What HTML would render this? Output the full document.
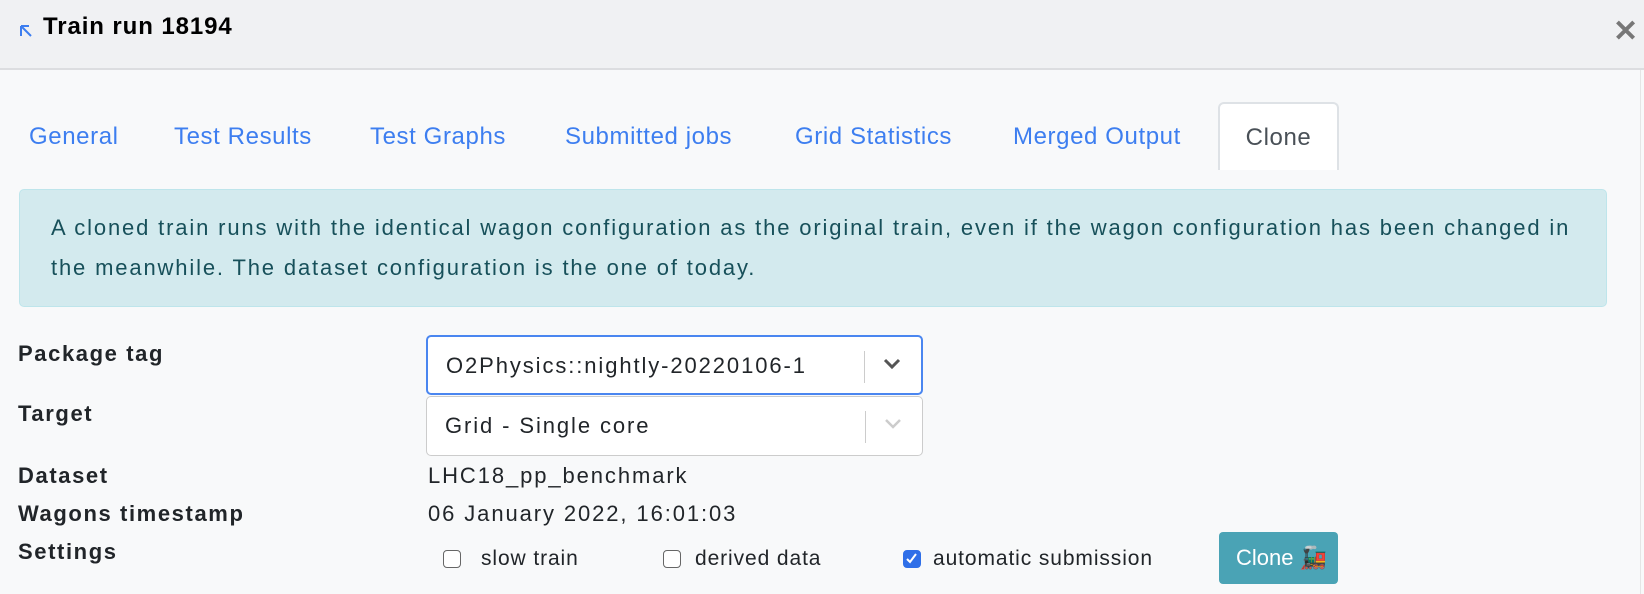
<!DOCTYPE html>
<html><head><meta charset="utf-8"><style>
*{box-sizing:border-box;margin:0;padding:0}
body{width:1644px;height:594px;overflow:hidden;background:#f8f9fa;font-family:"Liberation Sans",sans-serif;position:relative;color:#212529}
.hdr{position:absolute;left:0;top:0;width:1644px;height:70px;background:#f0f1f3;border-bottom:2px solid #dcdde0}
.title{position:absolute;left:43px;top:13px;font-size:24px;font-weight:bold;color:#000;letter-spacing:0.9px}
.close{position:absolute;left:1613px;top:15px;font-size:30px;font-weight:bold;color:#777;line-height:34px}
.tab{position:absolute;top:123px;font-size:24px;color:#3d7ef0;letter-spacing:0.6px}
.ctab{position:absolute;left:1218px;top:102px;width:121px;height:68px;background:#fff;border:2px solid #dee2e6;border-bottom:none;border-radius:6px 6px 0 0;color:#495057;font-size:24px;text-align:center;padding-top:20px;letter-spacing:0.6px}
.alert{position:absolute;left:19px;top:189px;width:1588px;height:118px;background:#d3eaee;border:1px solid #bee5eb;border-radius:5px;color:#17505a;font-size:22px;letter-spacing:1.85px;line-height:40px;padding:18px 31px 0 31px}
.lbl{position:absolute;left:18px;font-size:22px;font-weight:bold;color:#212529;letter-spacing:1.6px}
.val{position:absolute;left:428px;font-size:22px;letter-spacing:1.9px}
.sel{position:absolute;left:426px;width:497px;height:60px;background:#fff;border:1px solid #ccc;border-radius:5px;font-size:22px;letter-spacing:1.9px;padding:16px 0 0 18px}
.sel .sep{position:absolute;right:56px;top:14px;width:1px;height:32px;background:#ccc}
.sel svg{position:absolute;right:20px;top:21px}
.cb{position:absolute;top:550px;width:18px;height:18px;border:1.5px solid #666;border-radius:4px;background:#fff}
.cbl{position:absolute;top:547px;font-size:21px;letter-spacing:0.9px}
.btn{position:absolute;left:1219px;top:532px;width:119px;height:52px;background:#4aa3b5;border-radius:4px;color:#fff;font-size:22px;padding:13px 0 0 17px}
</style></head><body>
<div class="hdr">
<svg style="position:absolute;left:20px;top:25px" width="14" height="14" viewBox="0 0 14 14"><path d="M1 1h8M1 1v10M2 2l9 9" stroke="#3d7ef0" stroke-width="2" fill="none"/></svg>
<div class="title">Train run 18194</div>
<div class="close">✕</div>
</div>
<div style="position:absolute;left:1640px;top:70px;width:1px;height:524px;background:#e5e5e5"></div>
<div class="tab" style="left:29px">General</div>
<div class="tab" style="left:174px">Test Results</div>
<div class="tab" style="left:370px">Test Graphs</div>
<div class="tab" style="left:565px">Submitted jobs</div>
<div class="tab" style="left:795px">Grid Statistics</div>
<div class="tab" style="left:1013px">Merged Output</div>
<div class="ctab">Clone</div>
<div class="alert">A cloned train runs with the identical wagon configuration as the original train, even if the wagon configuration has been changed in the meanwhile. The dataset configuration is the one of today.</div>
<div class="lbl" style="top:341px">Package tag</div>
<div class="lbl" style="top:401px">Target</div>
<div class="lbl" style="top:463px">Dataset</div>
<div class="lbl" style="top:501px">Wagons timestamp</div>
<div class="lbl" style="top:539px">Settings</div>
<div class="sel" style="top:335px;border:2px solid #4a86f0;height:60px">O2Physics::nightly-20220106-1<div class="sep"></div><svg width="18" height="12" viewBox="0 0 18 12"><path d="M2 2l7 7 7-7" stroke="#555" stroke-width="3" fill="none"/></svg></div>
<div class="sel" style="top:396px">Grid - Single core<div class="sep"></div><svg width="18" height="12" viewBox="0 0 18 12"><path d="M2 2l7 7 7-7" stroke="#ccc" stroke-width="2.5" fill="none"/></svg></div>
<div class="val" style="top:463px">LHC18_pp_benchmark</div>
<div class="val" style="top:501px">06 January 2022, 16:01:03</div>
<div class="cb" style="left:443px"></div><div class="cbl" style="left:481px">slow train</div>
<div class="cb" style="left:663px"></div><div class="cbl" style="left:695px">derived data</div>
<div class="cb" style="left:903px;background:#2f6fe8;border-color:#2f6fe8"><svg width="15" height="15" viewBox="0 0 15 15" style="position:absolute;left:0;top:0"><path d="M3 8l3 3 6-8" stroke="#fff" stroke-width="2" fill="none"/></svg></div><div class="cbl" style="left:933px">automatic submission</div>
<div class="btn">Clone 🚂</div>
</body></html>
